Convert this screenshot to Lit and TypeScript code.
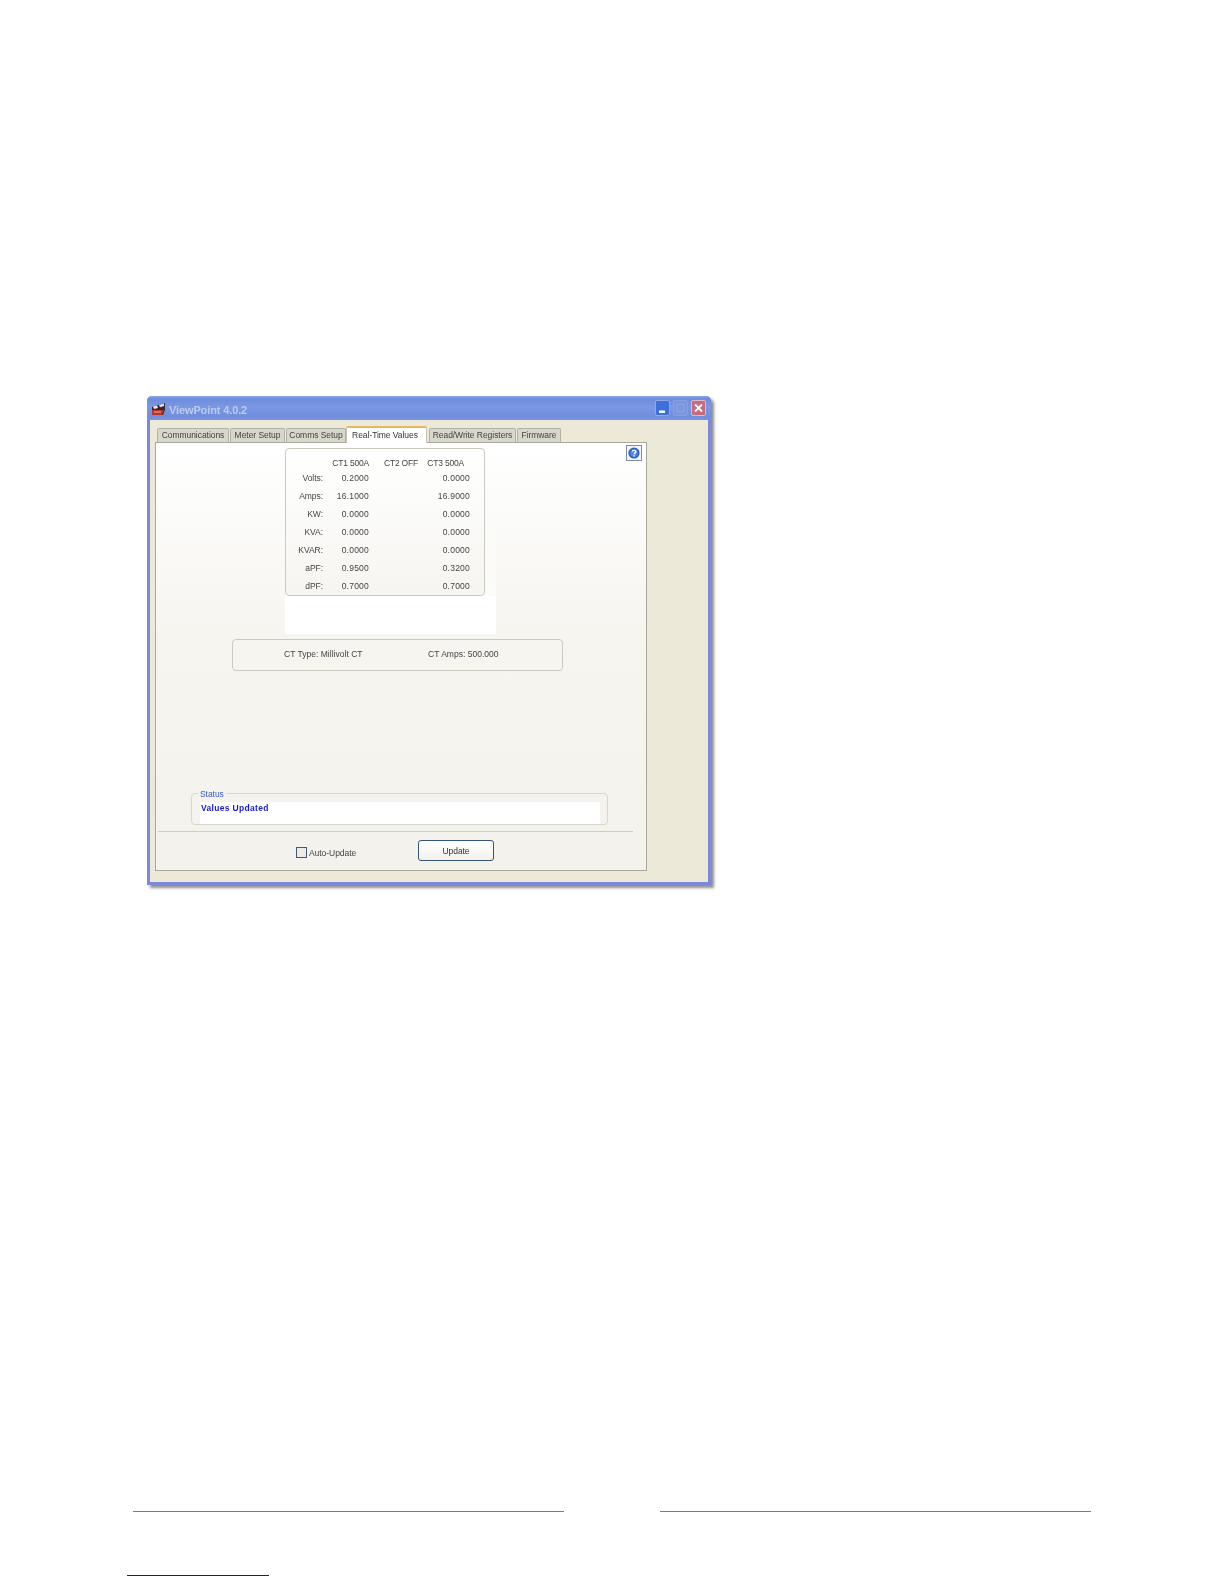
import { LitElement, html, css } from "lit";
import { customElement } from "lit/decorators.js";

const TABS = ["Communications", "Meter Setup", "Comms Setup", "Real-Time Values", "Read/Write Registers", "Firmware"];
const ROWS: [string, string, string][] = [
  ["Volts:", "0.2000", "0.0000"],
  ["Amps:", "16.1000", "16.9000"],
  ["KW:", "0.0000", "0.0000"],
  ["KVA:", "0.0000", "0.0000"],
  ["KVAR:", "0.0000", "0.0000"],
  ["aPF:", "0.9500", "0.3200"],
  ["dPF:", "0.7000", "0.7000"],
];

@customElement("app-root")
export class AppRoot extends LitElement {
  static styles = css`
    :host { display: block; height: 1584px; background: #fff; overflow: hidden;
      font-family: "Liberation Sans", Arial, sans-serif; font-size: 8.5px; letter-spacing: -.05px; color: #444; }
    .page { display: flex; flex-direction: column; padding-top: 396px; }
    .window { margin-left: 147px; width: 564px; height: 489px; box-sizing: border-box; display: flex; flex-direction: column;
      border: 3px solid #7d88d8; border-top: 0; border-radius: 5px 5px 0 0; box-shadow: 3px 3px 3px #8f8f8f; background: #ece9d8; }
    .title { height: 24px; flex: none; margin: 0 -3px; padding: 3px 4px 0 4px; display: flex; align-items: center; box-sizing: border-box;
      border-radius: 5px 5px 0 0; background: linear-gradient(#8aa6e6 0, #6c8cdc 12%, #7a98e2 45%, #6f8edc 85%, #7d90dc 100%); }
    .appicon { width: 15px; height: 14px; flex: none; margin: -1px 3px 0 0; filter: blur(.4px); }
    .name { font-size: 11px; font-weight: bold; letter-spacing: -.12px; color: #bccaee; filter: blur(.4px); }
    .btns { margin-left: auto; display: flex; gap: 3px; padding-right: 1px; margin-top: -3px; filter: blur(.3px); }
    .btn { width: 15px; height: 16px; border-radius: 2px; box-sizing: border-box; display: block; border: 1px solid #8ea8ea; }
    .min { background: #3f70d8; }
    .max { background: #7b96dd; border-color: #87a0e2; }
    .close { background: #c56b7e; border-color: #dcb9c6; }
    .client { flex: 1; padding: 6px 0 0 5px; display: flex; flex-direction: column; }
    .tabs { margin-left: 2px; height: 16px; display: grid; grid-template-columns: 72px 55px 60px 81px 87px 44px; column-gap: 1px; align-items: end; }
    .tab { height: 14px; padding-bottom: 2px; box-sizing: border-box; border: 1px solid #b3b2a6; border-bottom: 0; border-radius: 2px 2px 0 0; background: #d9d7cb;
      display: flex; align-items: center; justify-content: center; color: #44443e; white-space: nowrap; }
    .tab span { filter: blur(.35px); }
    .tab.on { height: 17px; margin: 0 1px -1px -1px; padding: 0 3px 2px 0; background: #fff; border-color: #c4c1b0; border-top: 2px solid #e8b765; color: #333; position: relative; z-index: 1; }
    .sheet { width: 492px; height: 429px; box-sizing: border-box; border: 1px solid #a9a89c; padding-top: 2px;
      background: linear-gradient(#fff 0, #f6f5f0 45%, #f3f2ec 100%); display: flex; flex-direction: column; }
    .top { display: flex; align-items: flex-start; }
    .stack { margin: 3px 0 0 129px; width: 211px; background: linear-gradient(transparent 25%, #fcfcfa 80%); }
    .group { box-sizing: border-box; border: 1px solid #cbcac0; border-radius: 4px; }
    .values { width: 200px; height: 148px; padding-top: 5px; display: grid; grid-template-columns: 37px 46px 52px 49px; grid-auto-rows: 18px; grid-template-rows: 15px;
      align-items: center; background: linear-gradient(#fff, #f6f5f1); }
    .txt { filter: blur(.35px); white-space: nowrap; }
    .num { letter-spacing: .22px; }
    .r { text-align: right; }
    .h { align-self: end; margin-bottom: 1px; letter-spacing: -.2px; }
    .h2 { padding-right: 3px; }
    .h3 { padding-right: 6px; }
    .blank { height: 38px; background: #fff; }
    .help { margin: 0 0 0 130px; width: 16px; height: 16px; box-sizing: border-box; border: 1px solid #7b8aae; background: #f4f6fb; display: flex; align-items: center; justify-content: center; }
    .help svg { width: 12px; height: 12px; display: block; filter: blur(.25px); }
    .ct { margin: 5px 0 0 76px; width: 331px; height: 32px; padding: 0 0 2px 51px; display: grid; grid-template-columns: 144px auto; align-items: center; letter-spacing: .02px; }
    .status { margin: 122px 0 0 35px; width: 417px; height: 32px; padding: 8px 7px 0 8px; position: relative; border-color: #d8d7cd; }
    .legend { position: absolute; left: 6px; top: -5px; padding: 0 2px; color: #3a5cb8; background: #f4f3ee; line-height: 11px; }
    .msg { height: 22px; box-sizing: border-box; padding: 1px 0 0 1px; background: #fff; color: #1c1cc8; font-weight: bold; line-height: 11px; letter-spacing: .32px; }
    .sep { margin: 6px 0 0 2px; width: 475px; height: 1px; background: #cfcec4; }
    .actions { margin: 8px 0 0 140px; display: flex; align-items: flex-start; }
    .check { margin-top: 7px; width: 11px; height: 11px; box-sizing: border-box; border: 1px solid #3f5a78; background: #ecebe4; }
    .lab { margin: 7px 0 0 2px; width: 109px; line-height: 12px; }
    .update { width: 76px; height: 21px; box-sizing: border-box; border: 1px solid #2f5678; border-radius: 3px; background: linear-gradient(#fff, #f2f1ea);
      display: flex; align-items: center; justify-content: center; color: #333; }
    .rules { margin: 626px 0 0 133px; display: flex; gap: 96px; }
    .rule { width: 431px; height: 1px; background: #5b83a3; }
    .link { margin: 63px 0 0 127px; width: 142px; height: 1px; background: #17178f; }
  `;

  render() {
    return html`<div class="page">
      <div class="window">
        <div class="title">
          <svg class="appicon" viewBox="0 0 15 14">
            <path d="M1 5 L14 1 V8 L12 13 H1 Z" fill="#3a2530"/>
            <path d="M1 8 H13 L11 13 H1 Z" fill="#b8342a"/>
            <path d="M2 4.5 L6 3.4 L7 6 L3 7 Z M8 3 L13 1.6 L13 4 L9 5.3 Z" fill="#e9e4ea"/>
            <path d="M3 10 H10" stroke="#eab39a" stroke-width="1"/>
          </svg>
          <span class="name">ViewPoint 4.0.2</span>
          <div class="btns">
            <svg class="btn min" viewBox="0 0 13 14"><rect x="3" y="9.5" width="6" height="2.4" fill="#fff"/></svg>
            <svg class="btn max" viewBox="0 0 13 14"><rect x="3" y="3.5" width="7" height="7" fill="none" stroke="#8fa6e6" stroke-width="1"/></svg>
            <svg class="btn close" viewBox="0 0 13 14"><path d="M3 3.5 L10 10.5 M10 3.5 L3 10.5" stroke="#fff" stroke-width="1.8"/></svg>
          </div>
        </div>
        <div class="client">
          <div class="tabs">
            ${TABS.map((t, i) => html`<div class="tab ${i === 3 ? "on" : ""}"><span>${t}</span></div>`)}
          </div>
          <div class="sheet">
            <div class="top">
              <div class="stack">
                <div class="group values">
                  <span></span>
                  <span class="txt r h">CT1 500A</span>
                  <span class="txt r h h2">CT2 OFF</span>
                  <span class="txt r h h3">CT3 500A</span>
                  ${ROWS.map(([l, a, c]) => html`
                    <span class="txt r">${l}</span>
                    <span class="txt r num">${a}</span>
                    <span></span>
                    <span class="txt r num">${c}</span>`)}
                </div>
                <div class="blank"></div>
              </div>
              <div class="help">
                <svg viewBox="0 0 12 12">
                  <circle cx="6" cy="6" r="5.6" fill="#2f62c4"/>
                  <circle cx="6" cy="6" r="3.8" fill="#4f86e0"/>
                  <path d="M4.3 4.6 C4.3 2.9 7.9 2.9 7.9 4.7 C7.9 5.9 6.1 5.9 6.1 7.2" fill="none" stroke="#fff" stroke-width="1.3"/>
                  <rect x="5.4" y="8.1" width="1.4" height="1.4" fill="#fff"/>
                </svg>
              </div>
            </div>
            <div class="group ct">
              <span class="txt">CT Type: Millivolt CT</span>
              <span class="txt">CT Amps: 500.000</span>
            </div>
            <div class="group status">
              <span class="legend txt">Status</span>
              <div class="msg"><span class="txt">Values Updated</span></div>
            </div>
            <div class="sep"></div>
            <div class="actions">
              <div class="check"></div>
              <span class="lab txt">Auto-Update</span>
              <div class="update"><span class="txt">Update</span></div>
            </div>
          </div>
        </div>
      </div>
      <div class="rules"><div class="rule"></div><div class="rule"></div></div>
      <div class="link"></div>
    </div>`;
  }
}
